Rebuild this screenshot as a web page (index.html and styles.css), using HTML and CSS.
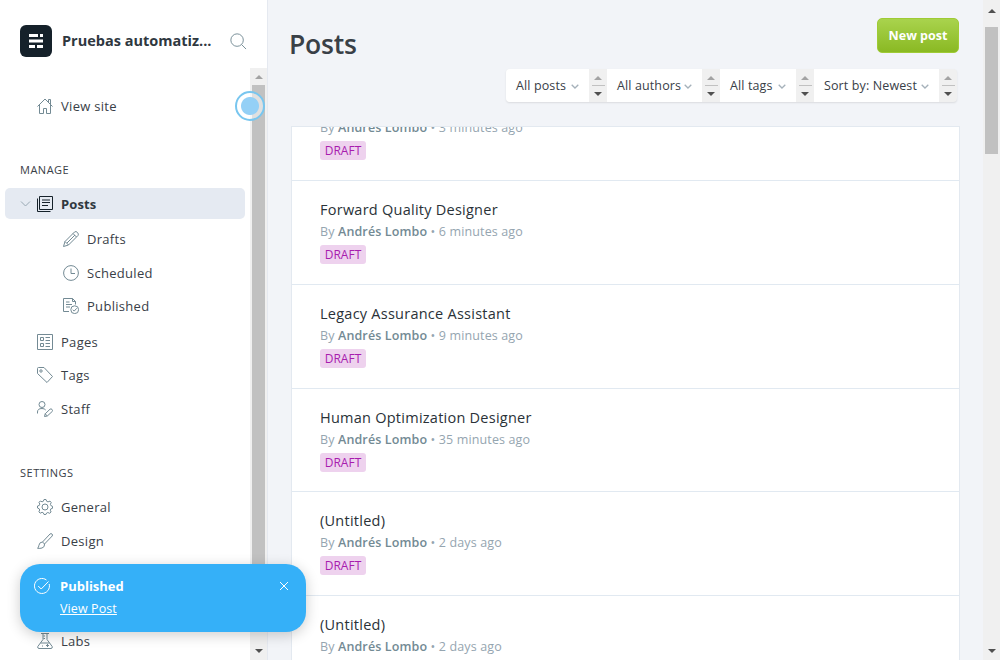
FILE: index.html
```html
<!DOCTYPE html>
<html lang="en">
<head>
<meta charset="utf-8">
<title>Posts</title>
<link rel="stylesheet" href="styles.css">
</head>
<body>
<div class="app">
  <aside class="sidebar">
    <header class="site">
      <svg class="logo" viewBox="0 0 32 32"><rect width="32" height="32" rx="6" fill="#15212a"/><path fill="#fff" d="M9 9h9v3H9zM20 9h3v3h-3zM9 14.500h14v3H9zM9 20h6v3H9zM17 20h6v3h-6z"/></svg>
      <span class="site-name">Pruebas automatiz...</span>
      <svg class="search" viewBox="0 0 18 18"><circle cx="7.500" cy="7.500" r="6.600"/><path d="M12.300 12.300 17 17"/></svg>
    </header>
    <div class="nav-scroll">
      <nav class="nav">
        <a class="item"><svg class="icon" viewBox="0 0 16 16"><path d="M.5 8.500 8 1l7.500 7.500M2.500 7v8.500h4v-5h3v5h4V7M11.500 4V1.500h2v5"/></svg>View site</a>
        <h2 class="group">MANAGE</h2>
        <a class="item active"><svg class="chevron" viewBox="0 0 10 6"><path d="M.5.5 5 5 9.500.5"/></svg><svg class="icon" viewBox="0 0 16 16"><path d="M2.500.5h13v13h-13zM.5 2.500v13h13M5 4h8M5 6.500h8M5 9.500h6"/></svg>Posts</a>
        <a class="item sub drafts"><svg class="icon" viewBox="0 0 16 16"><path d="M.5 15.500 2 10.500 11.500 1Q13-.2 14.500 1.500T15 4.500L5.500 14zM2 10.500 5.500 14M10 2.500 13.500 6M4 12 12 4"/></svg>Drafts</a>
        <a class="item sub"><svg class="icon" viewBox="0 0 16 16"><circle cx="8" cy="8" r="7.400"/><path d="M8 3.500V8.500h4"/></svg>Scheduled</a>
        <a class="item sub"><svg class="icon" viewBox="0 0 16 16"><path d="M6 13.500H.5V.5h9l3 3v3M9.500.5v3h3M3 4h3.500M3 6.500h6M3 9h4"/><circle cx="11.700" cy="11.700" r="3.900"/><path d="m9.800 11.700 1.400 1.400 2.500-2.800"/></svg>Published</a>
        <a class="item pages"><svg class="icon" viewBox="0 0 16 16"><path d="M.5.5h15v15H.5zM3.500 3.500h3v3h-3zM3.500 9.500h3v3h-3zM8.500 3.500H13M8.500 6.500H13M8.500 9.500H13M8.500 12.500H13"/></svg>Pages</a>
        <a class="item"><svg class="icon" viewBox="0 0 16 16"><path d="M.5 1.500Q.5.5 1.500.5H7L15.500 9.500 10 15.500.5 6.500z"/><circle cx="4" cy="4" r="1.200"/></svg>Tags</a>
        <a class="item"><svg class="icon" viewBox="0 0 16 16"><circle cx="5" cy="3.500" r="3"/><path d="M.5 12.500V11Q.5 7.500 5 7.500q2.500 0 3.700 1.500M7.500 15.500 8.200 12.800 13 8.200q1-.8 2 .2t.3 2L10.300 15zM8.200 12.800 10.300 15"/></svg>Staff</a>
        <h2 class="group settings">SETTINGS</h2>
        <a class="item"><svg class="icon" viewBox="0 0 16 16"><path d="M6.300 2.300 7 .5h2l.7 1.800 1.300.6 2-.8 1.200 1.300-.8 2 .5 1.200 1.600.7v2l-1.700.6-.5 1.300.8 1.800-1.400 1.300-1.900-.8-1.200.5-.7 1.500H7l-.6-1.600-1.300-.6-1.900.9-1.300-1.400.8-1.800-.5-1.200L.5 9V7l1.800-.6.5-1.300-.8-1.800 1.300-1.300 1.800.8z"/><circle cx="8" cy="8" r="3"/></svg>General</a>
        <a class="item"><svg class="icon" viewBox="0 0 16 16"><path d="M5.500 9 13 1q1-.8 2 0t.2 2L7.500 11M5.500 9 7.500 11Q8 14 5 15q-2 .6-4.500.3 1.300-1 1.400-3Q2.500 9 5.500 9z"/></svg>Design</a>
        <a class="item labs"><svg class="icon" viewBox="0 0 16 16"><path d="M4 .5h8M6 .5v6L.8 13.500q-.5 2 1.200 2h12q1.700 0 1.200-2L10 6.500v-6M6.500 3H8M6.500 5.500H8M3.500 10h9M5 13h1M10.500 11v3M9 12.500h3"/></svg>Labs</a>
      </nav>
      <div class="scrollbar">
        <i class="up muted"></i><div class="thumb"></div><i class="down"></i>
      </div>
    </div>
  </aside>
  <main class="main">
    <div class="top">
      <h1 class="title">Posts</h1>
      <a class="new-post">New post</a>
    </div>
    <div class="filters">
      <div class="filter all-posts"><span>All posts</span><svg viewBox="0 0 8 5"><path d="M.7.7 4 4 7.300.7"/></svg></div><div class="spin"><i class="up muted"></i><b></b><i class="down"></i></div>
      <div class="filter all-authors"><span>All authors</span><svg viewBox="0 0 8 5"><path d="M.7.7 4 4 7.300.7"/></svg></div><div class="spin"><i class="up muted"></i><b></b><i class="down"></i></div>
      <div class="filter all-tags"><span>All tags</span><svg viewBox="0 0 8 5"><path d="M.7.7 4 4 7.300.7"/></svg></div><div class="spin"><i class="up muted"></i><b></b><i class="down"></i></div>
      <div class="filter sort"><span>Sort by: Newest</span><svg viewBox="0 0 8 5"><path d="M.7.7 4 4 7.300.7"/></svg></div><div class="spin last"><i class="up muted"></i><b></b><i class="down"></i></div>
    </div>
    <div class="list">
      <article class="post first"><p class="meta">By <strong>Andrés Lombo</strong> • 3 minutes ago</p><span class="badge">DRAFT</span></article>
      <article class="post"><h3>Forward Quality Designer</h3><p class="meta">By <strong>Andrés Lombo</strong> • 6 minutes ago</p><span class="badge">DRAFT</span></article>
      <article class="post"><h3>Legacy Assurance Assistant</h3><p class="meta">By <strong>Andrés Lombo</strong> • 9 minutes ago</p><span class="badge">DRAFT</span></article>
      <article class="post"><h3>Human Optimization Designer</h3><p class="meta">By <strong>Andrés Lombo</strong> • 35 minutes ago</p><span class="badge">DRAFT</span></article>
      <article class="post"><h3>(Untitled)</h3><p class="meta">By <strong>Andrés Lombo</strong> • 2 days ago</p><span class="badge">DRAFT</span></article>
      <article class="post"><h3>(Untitled)</h3><p class="meta">By <strong>Andrés Lombo</strong> • 2 days ago</p></article>
    </div>
  </main>
  <div class="scrollbar page-bar"><i class="up"></i><div class="thumb"></div><i class="down"></i></div>
</div>
<div class="beacon"></div>
<div class="toast">
  <svg class="check" viewBox="0 0 16 16"><path d="M15.200 6A7.500 7.500 0 1 1 12.500 2M4.200 8l3 3L14.500 3.500"/></svg>
  <div class="toast-text"><strong>Published</strong><a>View Post</a></div>
  <svg class="close" viewBox="0 0 10 10"><path d="m1 1 8 8M9 1 1 9"/></svg>
</div>
</body>
</html>
```
FILE: styles.css
```css
* { box-sizing: border-box; }
body { margin: 0; height: 660px; overflow: hidden; font-family: "Open Sans", "Noto Sans", sans-serif; font-size: 13px; color: #394047; background: #f2f4f8; }
h1, h2, h3, p { margin: 0; }
svg { flex: none; fill: none; stroke: #738a94; }
.app { display: flex; height: 660px; }

.sidebar { width: 268px; flex: none; display: flex; flex-direction: column; background: #fff; border-right: 1px solid #e5e9f0; }
.site { height: 68px; flex: none; display: flex; align-items: center; padding: 14px 20px 0; }
.logo { width: 32px; height: 32px; stroke: none; }
.site-name { width: 178px; padding: 0 0 2px 10px; font-size: 14.500px; font-weight: 700; white-space: nowrap; color: #2f383f; }
.search { width: 17px; height: 17px; }
.nav-scroll { flex: 1; display: flex; min-height: 0; overflow: hidden; }
.nav { width: 250px; flex: none; padding-top: 21px; }
.item { display: flex; align-items: center; height: 33.600px; padding-left: 37px; white-space: nowrap; letter-spacing: .3px; }
.icon { width: 16px; height: 16px; margin-right: 8px; }
.group { height: 20px; margin: 37px 0 8px 20px; font-size: 11px; font-weight: 400; line-height: 20px; letter-spacing: .5px; }
.group.settings { margin-bottom: 7.400px; }
.item.active { height: 31px; margin: 0 5px; padding: 1px 0 0 15px; border-radius: 5px; background: #e5eaf2; font-weight: 700; letter-spacing: .1px; color: #2f383f; }
.active .icon { stroke: #15212a; }
.chevron { width: 11px; height: 6px; margin-right: 6px; stroke: #98a8b3; }
.sub { padding-left: 63px; }
.drafts { margin-top: 3.600px; }
.pages { margin-top: 2px; }
.labs { margin-top: 66.600px; }

.scrollbar { width: 17px; flex: none; display: flex; flex-direction: column; align-items: center; background: #f0f0f0; }
.scrollbar .up { margin: 7px 0 6px; }
.scrollbar .thumb { width: 13px; height: 540px; background: #c1c1c1; }
.scrollbar .down { margin: auto 0 7px; }
.page-bar .up { margin: 9px 0 14px; }
.page-bar .thumb { height: 127px; }
.up, .down { width: 0; height: 0; border: 4px solid transparent; }
.up { border-top: 0; border-bottom-color: #505050; }
.up.muted { border-bottom-color: #a3a3a3; }
.down { border-bottom: 0; border-top-color: #505050; }

.main { flex: 1; min-width: 0; display: flex; flex-direction: column; }
.top { display: flex; justify-content: space-between; align-items: flex-start; height: 69px; padding: 18px 24px 0 21px; }
.title { font-size: 26.500px; line-height: 52px; font-weight: 600; letter-spacing: -.2px; }
.new-post { width: 82px; height: 35px; border: 1px solid #9fcb35; border-radius: 5px; background: linear-gradient(#a9d34d, #8ab923); color: #fff; font-weight: 700; font-size: 12.500px; line-height: 34px; text-align: center; }
.filters { align-self: flex-end; display: flex; height: 33px; margin-right: 26px; border-radius: 4px; overflow: hidden; background: #f0f0f0; box-shadow: 0 1px 2px rgba(0,0,0,.1); }
.filter { display: flex; align-items: center; justify-content: space-between; padding: 0 10px 1px; background: #fff; white-space: nowrap; font-size: 12.500px; letter-spacing: .12px; }
.filter svg { width: 8px; height: 5px; margin-top: 2px; stroke: #a5b1ba; stroke-width: 1.300; }
.all-posts { width: 83px; }
.all-authors { width: 95px; }
.all-tags { width: 76px; }
.sort { width: 125px; }
.spin { width: 18px; display: flex; flex-direction: column; align-items: center; padding-top: 7px; }
.spin b { width: 13px; height: 1px; margin: 5px 0 6px; background: #c1c1c1; }

.list { flex: 1; min-height: 0; margin: 24px 23px 0 23px; border: solid #e3e9f0; border-width: 1px 1px 0; overflow: hidden; background: #fff; }
.post { height: 103.800px; padding: 18px 28px 0; border-bottom: 1px solid #e1e9f1; }
.post.first { display: flow-root; height: 54px; padding-top: 0; }
.first .meta { margin-top: -10px; }
.post h3 { font-size: 14.500px; line-height: 22px; font-weight: 500; letter-spacing: .25px; color: #2a3238; }
.meta { line-height: 22px; font-size: 12.500px; letter-spacing: .13px; color: #95a5b0; white-space: nowrap; }
.meta strong { font-weight: 600; color: #738a94; }
.badge { display: block; width: 46px; height: 19px; margin-top: 2px; border-radius: 3px; background: #eed2ee; color: #a81cae; font-size: 12px; line-height: 19px; text-align: center; }

.beacon { position: absolute; left: 235px; top: 91px; width: 30px; height: 30px; border: 2px solid #78c6ef; border-radius: 50%; background: radial-gradient(circle, #94d0f6 0 8.500px, rgba(255,255,255,.5) 9.500px); }
.toast { position: absolute; left: 20px; top: 564px; width: 286px; height: 68px; display: flex; padding: 11px 17px 0 14px; border-radius: 20px; background: #35b0f8; color: #fff; box-shadow: 0 3px 14px rgba(0,0,0,.2); }
.toast svg { stroke: #fff; }
.check { width: 16px; height: 16px; margin-top: 3px; }
.close { width: 10px; height: 10px; margin-top: 6px; }
.toast-text { flex: 1; display: flex; flex-direction: column; padding-left: 10px; line-height: 22px; }
.toast-text a { margin-top: 1px; font-size: 12.500px; letter-spacing: .1px; text-decoration: underline; }
```
